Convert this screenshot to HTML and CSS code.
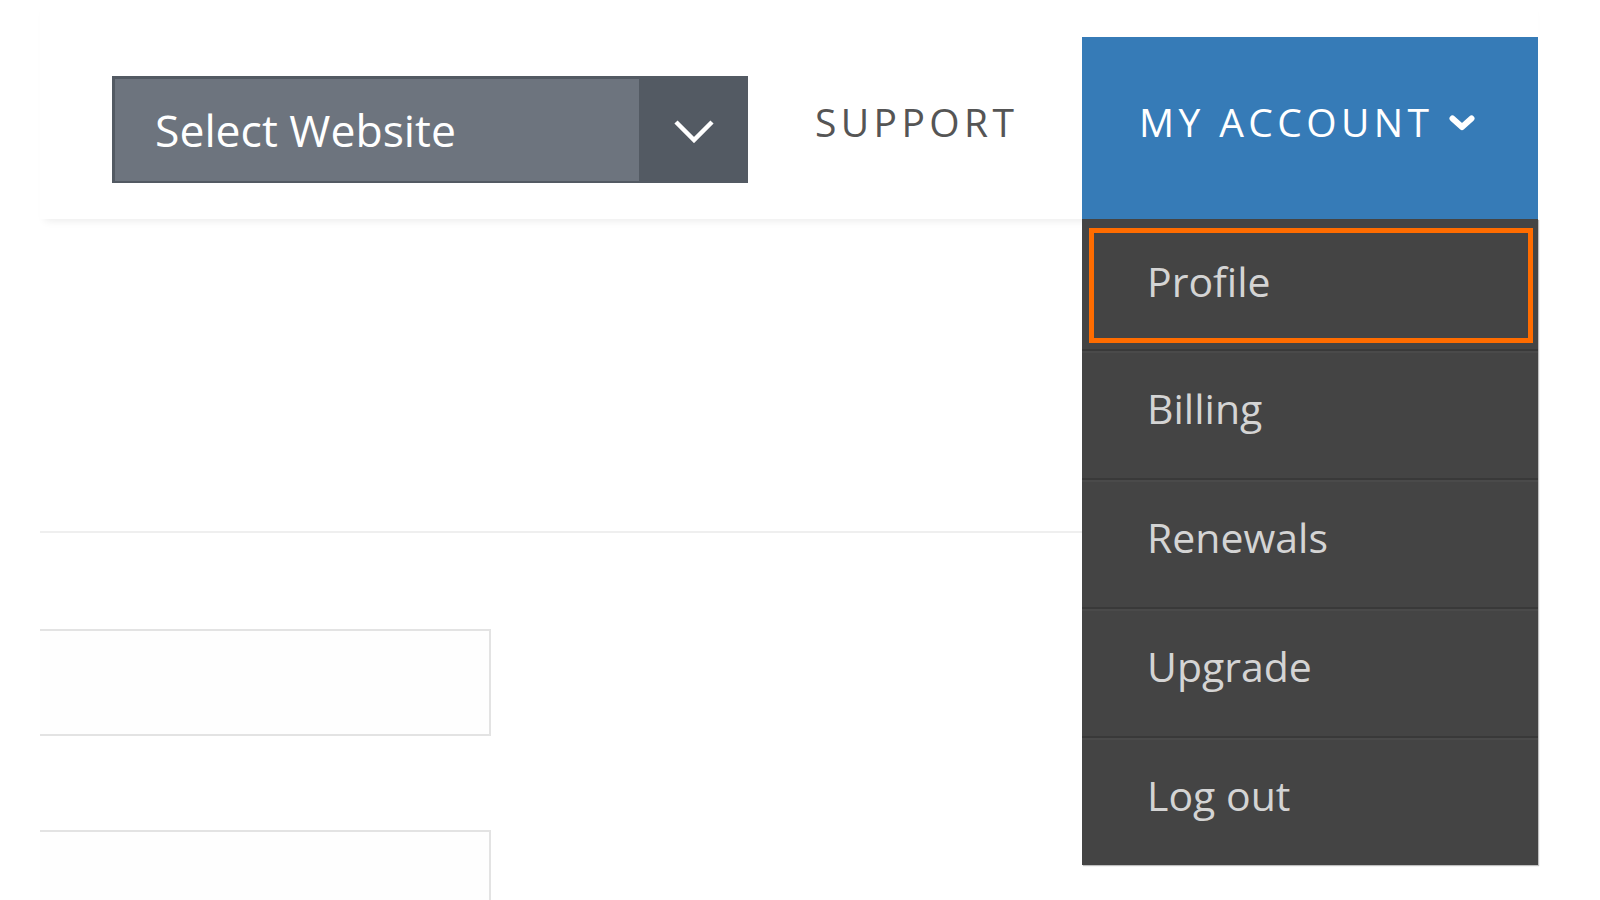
FILE: index.html
```html
<!DOCTYPE html>
<html lang="en">
<head>
  <meta charset="UTF-8">
  <meta name="viewport" content="width=device-width, initial-scale=1.0">
  <title>My Account</title>
  <link rel="stylesheet" href="styles.css">
</head>
<body>

  <div class="page">
    <header class="header">
      <div class="site-select">
        <div class="site-select-label">Select Website</div>
        <div class="site-select-arrow">
          <svg width="40" height="24" viewBox="0 0 40 24"><polyline points="2,3 20,21 38,3" fill="none" stroke="#fff" stroke-width="4.5"/></svg>
        </div>
      </div>

      <a class="nav-link" href="#">SUPPORT</a>

      <div class="account">
        <a class="account-toggle" href="#">MY ACCOUNT
          <svg class="caret" width="26" height="16" viewBox="0 0 26 16"><polyline points="3.5,3.5 13,12 22.5,3.5" fill="none" stroke="#fff" stroke-width="6" stroke-linecap="round" stroke-linejoin="round"/></svg>
        </a>
        <ul class="account-menu">
          <li class="current"><a class="focused" href="#">Profile</a></li>
          <li><a href="#">Billing</a></li>
          <li><a href="#">Renewals</a></li>
          <li><a href="#">Upgrade</a></li>
          <li><a href="#">Log out</a></li>
        </ul>
      </div>
    </header>

    <div class="content">
      <div class="band"></div>
      <div class="field"></div>
      <div class="field field-next"></div>
    </div>
  </div>

</body>
</html>
```

FILE: styles.css
```css
body {
  font-family: "Open Sans", "Liberation Sans", sans-serif;
  background-color: #fff;
  margin: 0;
  overflow: hidden;
}
.page {
  padding: 0 62px 0 40px;
}
.header {
  display: flex;
  align-items: flex-start;
  height: 219px;
  box-shadow: 0 7px 8px -5px rgba(0,0,0,0.08);
  position: relative;
  z-index: 2;
}
.site-select {
  display: flex;
  width: 636px;
  height: 107px;
  box-sizing: border-box;
  margin: 76px 0 0 72px;
  background-color: #535a63;
  border-top: 3px solid #535a63;
  border-left: 3px solid #535a63;
  border-bottom: 2px solid #535a63;
}
.site-select-label {
  flex: 1;
  display: flex;
  align-items: center;
  padding-left: 40px;
  background-color: #6d747e;
  color: #fff;
  font-size: 44.5px;
  line-height: 1;
}
.site-select-arrow {
  width: 109px;
  display: flex;
  align-items: center;
  justify-content: center;
  padding-top: 2px;
}
.nav-link {
  margin: 102px 0 0 67px;
  font-size: 39px;
  line-height: 39px;
  letter-spacing: 4.4px;
  color: #555;
  text-decoration: none;
}
.account {
  position: relative;
  margin: 37px 0 0 auto;
  width: 456px;
}
.account-toggle {
  display: flex;
  align-items: flex-start;
  height: 182px;
  box-sizing: border-box;
  padding: 65px 0 0 57px;
  background-color: #367bb7;
  color: #fff;
  font-size: 39px;
  line-height: 39px;
  letter-spacing: 4.4px;
  text-decoration: none;
}
.caret {
  margin: 13px 0 0 16px;
}
.account-menu {
  position: absolute;
  top: 100%;
  left: 0;
  right: 0;
  list-style: none;
  margin: 0;
  padding: 0;
  background-color: #444;
  box-shadow: 1px 1px 1px rgba(0,0,0,0.25);
}
.account-menu li {
  height: 129px;
  box-sizing: border-box;
}
.account-menu li.current {
  height: 130px;
  padding: 9px 5px 0 7px;
}
.account-menu li + li {
  border-top: 2px solid #393939;
  box-shadow: inset 0 2px 0 #4a4a4a;
}
.account-menu a {
  display: block;
  height: 100%;
  box-sizing: border-box;
  padding: 37px 0 0 65px;
  color: #d4d4d4;
  font-size: 41px;
  line-height: 41px;
  text-decoration: none;
}
.account-menu a.focused {
  height: 115px;
  padding: 28px 0 0 53px;
  border: 5px solid #ff6c00;
}
.content {
  position: relative;
  z-index: 1;
}
.band {
  height: 312px;
  border-bottom: 2px solid #efefef;
}
.field {
  width: 451px;
  height: 107px;
  box-sizing: border-box;
  margin-top: 96px;
  border: 2px solid #e3e3e3;
  border-left: none;
  background-color: #fefefe;
}
.field-next {
  margin-top: 94px;
}
```
